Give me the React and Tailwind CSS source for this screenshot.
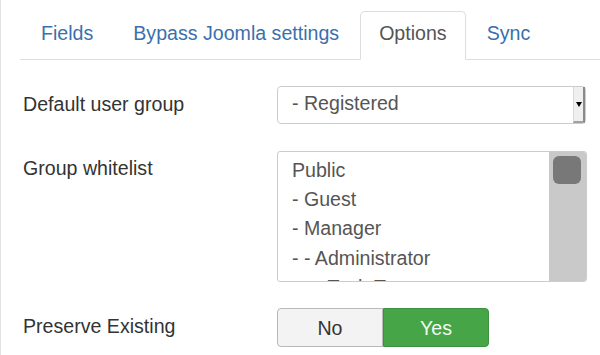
export default function App() {
  const tabs = [
    { label: "Fields", active: false },
    { label: "Bypass Joomla settings", active: false },
    { label: "Options", active: true },
    { label: "Sync", active: false },
  ];
  const groups = ["Public", "- Guest", "- Manager", "- - Administrator", "- - - Tech Team"];
  return (
    <div className="w-[600px] h-[355px] overflow-hidden bg-white border-l border-[#e2e2e2] font-['Liberation_Sans',Arial,sans-serif] text-[19.6px]">
      <ul className="flex ml-[19px] pl-[2px] pt-[11px] border-b border-[#dddddd]">
        {tabs.map((t) => (
          <li key={t.label} className="-mb-px mr-[2px]">
            <span
              className={
                t.active
                  ? "block px-[18px] pt-[10px] pb-[15px] leading-[22px] border border-[#dddddd] border-b-white rounded-t-[5px] bg-white text-[#555555] whitespace-nowrap"
                  : "block px-[18px] pt-[10px] pb-[15px] leading-[22px] border border-transparent text-[#3a70ad] whitespace-nowrap"
              }
            >
              {t.label}
            </span>
          </li>
        ))}
      </ul>

      <div className="flex flex-col pl-[22px] pt-[26px]">
        <div className="flex items-start h-[38px]">
          <div className="w-[254px] mt-[7px] leading-[22px] text-[#333333]">Default user group</div>
          <div className="w-[309px] h-[38px] border border-[#cccccc] rounded-[4px] flex bg-white">
            <div className="flex-1 pl-[14px] pt-[5px] leading-[22px] text-[#555555]">- Registered</div>
            <div className="w-[12px] h-full bg-[#efefef] border-l border-[#d8d8d8] border-r-2 border-r-[#8a8a8a] border-b-2 border-b-[#a0a0a0] flex items-center justify-center">
              <div className="w-0 h-0 border-l-[3px] border-r-[3px] border-t-[5px] border-l-transparent border-r-transparent border-t-black" />
            </div>
          </div>
        </div>

        <div className="flex items-start mt-[27px]">
          <div className="w-[254px] mt-[6px] leading-[22px] text-[#333333]">Group whitelist</div>
          <div className="w-[310px] h-[131px] border border-[#cccccc] rounded-[3px] flex overflow-hidden bg-white">
            <div className="flex-1 pl-[14px] pt-[4px] leading-[29.2px] text-[#555555] overflow-hidden whitespace-nowrap">
              {groups.map((g) => (
                <div key={g}>{g}</div>
              ))}
            </div>
            <div className="w-[37px] h-full bg-[#c9c9c9] pt-[4px] pl-[4px]">
              <div className="w-[28px] h-[28px] rounded-[6px] bg-[#787878]" />
            </div>
          </div>
        </div>

        <div className="flex items-start mt-[26px]">
          <div className="w-[254px] mt-[7px] leading-[22px] text-[#333333]">Preserve Existing</div>
          <div className="flex">
            <div className="w-[106px] h-[39px] border border-[#b8b8b8] rounded-l-[4px] bg-[#f3f3f3] text-[#333333] flex items-center justify-center leading-[22px]">
              No
            </div>
            <div className="w-[106px] h-[39px] border border-[#3e8f3e] rounded-r-[4px] bg-[#46a546] text-[#f2faf2] flex items-center justify-center leading-[22px]">
              Yes
            </div>
          </div>
        </div>
      </div>
    </div>
  );
}
